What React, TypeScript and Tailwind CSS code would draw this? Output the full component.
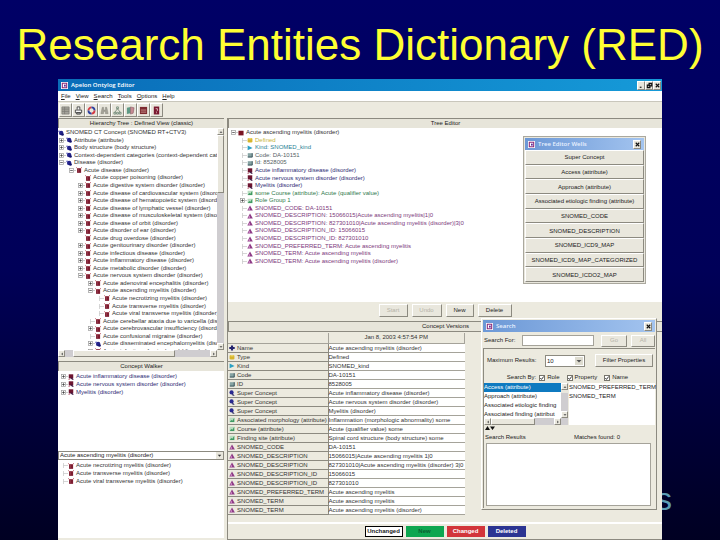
import React from 'react';

type IconKind =
  | 'node' | 'concept' | 'pointer' | 'square' | 'defined' | 'kind' | 'code' | 'role' | 'property' | 'plus4' | 'superc';

function Icon({ kind }: { kind: IconKind }) {
  const shapes: Record<IconKind, React.ReactNode> = {
    node: (
      <>
        <circle cx="4.2" cy="4" r="3" fill="#23238c" />
        <circle cx="1.4" cy="1.8" r="1.1" fill="#5a5ab4" />
        <circle cx="6" cy="6" r="1.8" fill="#15156e" />
      </>
    ),
    concept: (
      <>
        <rect x="1.4" y="1.6" width="5.4" height="6.2" fill="#7d1c30" />
        <path d="M0.2 0.4L2.4 2.6M7.8 0.2L5.8 2.4" stroke="#b8505c" strokeWidth="1.1" />
        <path d="M3.2 2.6v4" stroke="#a85060" strokeWidth="0.7" />
      </>
    ),
    pointer: (
      <>
        <path d="M1 0.4h6v5.6H1z" fill="#6e1530" />
        <path d="M5 4.4l2.8 3.4H5.4L3.6 5.4z" fill="#3b1540" />
        <path d="M0.4 7.4h2.4" stroke="#c06070" strokeWidth="0.9" />
      </>
    ),
    square: <rect x="0.6" y="1" width="6.8" height="6.2" fill="#7a1522" />,
    defined: (
      <>
        <rect x="0.8" y="1.2" width="6.4" height="6" rx="1.6" fill="#d6b52c" />
        <path d="M2 2.4h4" stroke="#fff3a0" strokeWidth="1" />
      </>
    ),
    kind: <path d="M0.8 0.8L7.4 4 0.8 7z" fill="#2aa0c4" />,
    code: (
      <>
        <rect x="1" y="1.6" width="6" height="5.2" fill="#86a3a3" />
        <path d="M7 1.6v5.2H1" fill="none" stroke="#2d4a50" strokeWidth="1.2" />
      </>
    ),
    role: (
      <>
        <rect x="0.8" y="1" width="6.6" height="6" fill="#b9dcc0" />
        <path d="M7 1v5.6H1L3 4l1.6 1z" fill="#3f9a62" />
      </>
    ),
    property: (
      <>
        <path d="M4 0.6L7.8 7.2H0.4z" fill="#8e3a86" />
        <path d="M3 3.4L2 6.4h2z" fill="#e6a6dc" />
      </>
    ),
    plus4: <path d="M2.6 0.6h2.8v2h2.2v2.8H5.4v2H2.6v-2H0.4V2.6h2.2z" fill="#23236e" />,
    superc: (
      <>
        <circle cx="3.4" cy="3.2" r="2.8" fill="#2a2a92" />
        <path d="M4.4 4.2l3.2 3.4-3-0.2z" fill="#101050" />
      </>
    ),
  };
  return (
    <svg viewBox="0 0 8 8" className="size-[6px] shrink-0" aria-hidden="true">
      {shapes[kind]}
    </svg>
  );
}

type Mark = '+' | '-' | '.' | '';

function Toggle({ mark }: { mark: Mark }) {
  return (
    <svg viewBox="0 0 7 5" className="h-[5px] w-[7px] shrink-0" aria-hidden="true">
      {(mark === '+' || mark === '-') && (
        <>
          <rect x="0.5" y="0.5" width="4" height="4" fill="#fff" stroke="#9a9a9a" strokeWidth="0.7" />
          <path d={mark === '+' ? 'M1.2 2.5h2.6M2.5 1.2v2.6' : 'M1.2 2.5h2.6'} stroke="#333" strokeWidth="0.7" />
          <path d="M5 2.5h2" stroke="#b5b5b5" strokeWidth="0.7" />
        </>
      )}
      {mark === '.' && <path d="M2.5 0v5M2.5 2.5H7" stroke="#c4c4c4" strokeWidth="0.7" />}
    </svg>
  );
}

const indent = ['pl-0', 'pl-px', 'pl-[11px]', 'pl-[20px]', 'pl-[30px]', 'pl-[39px]'];

type Row = [number, Mark, IconKind, string];

const hierarchy: Row[] = [
  [1, '+', 'node', 'Attribute (attribute)'],
  [1, '+', 'node', 'Body structure (body structure)'],
  [1, '+', 'node', 'Context-dependent categories (context-dependent cate'],
  [1, '-', 'node', 'Disease (disorder)'],
  [2, '-', 'concept', 'Acute disease (disorder)'],
  [3, '', 'concept', 'Acute copper poisoning (disorder)'],
  [3, '+', 'concept', 'Acute digestive system disorder (disorder)'],
  [3, '+', 'concept', 'Acute disease of cardiovascular system (disord'],
  [3, '+', 'concept', 'Acute disease of hematopoietic system (disord'],
  [3, '+', 'concept', 'Acute disease of lymphatic vessel (disorder)'],
  [3, '+', 'concept', 'Acute disease of musculoskeletal system (disor'],
  [3, '+', 'concept', 'Acute disease of orbit (disorder)'],
  [3, '+', 'concept', 'Acute disorder of ear (disorder)'],
  [3, '', 'concept', 'Acute drug overdose (disorder)'],
  [3, '+', 'concept', 'Acute genitourinary disorder (disorder)'],
  [3, '+', 'concept', 'Acute infectious disease (disorder)'],
  [3, '+', 'concept', 'Acute inflammatory disease (disorder)'],
  [3, '+', 'concept', 'Acute metabolic disorder (disorder)'],
  [3, '-', 'concept', 'Acute nervous system disorder (disorder)'],
  [4, '+', 'concept', 'Acute adenoviral encephalitis (disorder)'],
  [4, '-', 'concept', 'Acute ascending myelitis (disorder)'],
  [5, '.', 'concept', 'Acute necrotizing myelitis (disorder)'],
  [5, '.', 'concept', 'Acute transverse myelitis (disorder)'],
  [5, '.', 'concept', 'Acute viral transverse myelitis (disorder)'],
  [4, '.', 'concept', 'Acute cerebellar ataxia due to varicella (disor'],
  [4, '+', 'concept', 'Acute cerebrovascular insufficiency (disorde'],
  [4, '.', 'concept', 'Acute confusional migraine (disorder)'],
  [4, '+', 'node', 'Acute disseminated encephalomyelitis (disor'],
  [4, '+', 'concept', 'Acute infection of spinal cord (disorder)'],
];

const editor: [Mark, IconKind, string, string][] = [
  ['.', 'defined', 'text-[#c9b73c]', 'Defined'],
  ['.', 'kind', 'text-[#2a7f96]', 'Kind: SNOMED_kind'],
  ['.', 'code', 'text-[#555f66]', 'Code: DA-10151'],
  ['.', 'code', 'text-[#555f66]', 'Id: 8528005'],
  ['.', 'pointer', 'text-[#2c2c74]', 'Acute inflammatory disease (disorder)'],
  ['.', 'pointer', 'text-[#2c2c74]', 'Acute nervous system disorder (disorder)'],
  ['.', 'pointer', 'text-[#2c2c74]', 'Myelitis (disorder)'],
  ['.', 'role', 'text-[#2f7a4c]', 'some Course (attribute): Acute (qualifier value)'],
  ['+', 'role', 'text-[#2f7a4c]', 'Role Group 1'],
  ['.', 'property', 'text-[#7c3a7c]', 'SNOMED_CODE: DA-10151'],
  ['.', 'property', 'text-[#7c3a7c]', 'SNOMED_DESCRIPTION: 15066015|Acute ascending myelitis|1|0'],
  ['.', 'property', 'text-[#7c3a7c]', 'SNOMED_DESCRIPTION: 827301010|Acute ascending myelitis (disorder)|3|0'],
  ['.', 'property', 'text-[#7c3a7c]', 'SNOMED_DESCRIPTION_ID: 15066015'],
  ['.', 'property', 'text-[#7c3a7c]', 'SNOMED_DESCRIPTION_ID: 827301010'],
  ['.', 'property', 'text-[#7c3a7c]', 'SNOMED_PREFERRED_TERM: Acute ascending myelitis'],
  ['.', 'property', 'text-[#7c3a7c]', 'SNOMED_TERM: Acute ascending myelitis'],
  ['.', 'property', 'text-[#7c3a7c]', 'SNOMED_TERM: Acute ascending myelitis (disorder)'],
];

const versions: [IconKind, string, string][] = [
  ['plus4', 'Name', 'Acute ascending myelitis (disorder)'],
  ['defined', 'Type', 'Defined'],
  ['kind', 'Kind', 'SNOMED_kind'],
  ['code', 'Code', 'DA-10151'],
  ['code', 'ID', '8528005'],
  ['superc', 'Super Concept', 'Acute inflammatory disease (disorder)'],
  ['superc', 'Super Concept', 'Acute nervous system disorder (disorder)'],
  ['superc', 'Super Concept', 'Myelitis (disorder)'],
  ['role', 'Associated morphology (attribute)', 'Inflammation (morphologic abnormality) some'],
  ['role', 'Course (attribute)', 'Acute (qualifier value) some'],
  ['role', 'Finding site (attribute)', 'Spinal cord structure (body structure) some'],
  ['property', 'SNOMED_CODE', 'DA-10151'],
  ['property', 'SNOMED_DESCRIPTION', '15066015|Acute ascending myelitis 1|0'],
  ['property', 'SNOMED_DESCRIPTION', '827301010|Acute ascending myelitis (disorder) 3|0'],
  ['property', 'SNOMED_DESCRIPTION_ID', '15066015'],
  ['property', 'SNOMED_DESCRIPTION_ID', '827301010'],
  ['property', 'SNOMED_PREFERRED_TERM', 'Acute ascending myelitis'],
  ['property', 'SNOMED_TERM', 'Acute ascending myelitis'],
  ['property', 'SNOMED_TERM', 'Acute ascending myelitis (disorder)'],
];

const wells = [
  'Super Concept',
  'Access (attribute)',
  'Approach (attribute)',
  'Associated etiologic finding (attribute)',
  'SNOMED_CODE',
  'SNOMED_DESCRIPTION',
  'SNOMED_ICD9_MAP',
  'SNOMED_ICD9_MAP_CATEGORIZED',
  'SNOMED_ICDO2_MAP',
];

const raised = 'border border-t-white border-l-white border-r-[#8c8a80] border-b-[#8c8a80] bg-[#e9e7dd]';

function TreeRow({ row }: { row: Row }) {
  const [depth, mark, icon, label] = row;
  return (
    <li className={`flex items-center ${indent[depth]}`}>
      <Toggle mark={mark} />
      <Icon kind={icon} />
      <span className="pl-[2px]">{label}</span>
    </li>
  );
}

function PanelHeader({ children }: { children: React.ReactNode }) {
  return (
    <h2 className="h-[10px] shrink-0 border-t border-l border-[#8c8a80] bg-[#e7e5da] text-center leading-[9px]">
      {children}
    </h2>
  );
}

function ScrollArrow({ dir }: { dir: 'up' | 'down' | 'left' | 'right' }) {
  const d = { up: 'M2 5h4L4 3z', down: 'M2 3h4L4 5z', left: 'M5 2v4L3 4z', right: 'M3 2v4l2-2z' }[dir];
  return (
    <button aria-label={`Scroll ${dir}`} className={`flex size-[7px] shrink-0 items-center justify-center ${raised}`}>
      <svg viewBox="0 0 8 8" className="size-[6px] shrink-0"><path d={d} fill="#444" /></svg>
    </button>
  );
}

function AppMark() {
  return (
    <svg viewBox="0 0 8 8" className="size-[7px] shrink-0" aria-hidden="true">
      <rect width="8" height="8" fill="#fff" />
      <path d="M1.5 1.5h5v5h-5z" fill="none" stroke="#8a2a7a" strokeWidth="1.2" />
      <path d="M3.4 3h2v2.2h-2z" fill="#5a2a9a" />
    </svg>
  );
}

function WindowButton({ kind }: { kind: 'min' | 'restore' | 'close' }) {
  const d = { min: 'M2 6h2', restore: 'M3.5 1.5h3v3h-3zM1.5 3.5h3v3h-3z', close: 'M2 2l4 4M6 2L2 6' }[kind];
  return (
    <button aria-label={kind} className={`flex h-[9px] w-[8px] items-center justify-center ${raised}`}>
      <svg viewBox="0 0 8 8" className="size-[7px] shrink-0"><path d={d} fill="none" stroke="#111" strokeWidth="1.3" /></svg>
    </button>
  );
}

function DialogTitle({ children }: { children: React.ReactNode }) {
  return (
    <div className="flex h-[12px] items-center gap-[3px] bg-linear-to-r from-[#6c98d6] to-[#a3c4ef] px-[3px]">
      <AppMark />
      <h3 className="flex-1 font-['Open_Sans',sans-serif] font-semibold text-[#e8f1ff]">{children}</h3>
      <WindowButton kind="close" />
    </div>
  );
}

const toolIcons: [string, React.ReactNode][] = [
  ['Save', <path key="a" d="M1 1h8v8H1zM1 3.5h8M1 6h8M4 1v8" fill="#a5a39b" stroke="#7b7972" strokeWidth="0.8" />],
  ['Print', <path key="a" d="M3.5 4V1h3v3M1.5 4.5h7v3h-7zM3 7.5h4V9H3z" fill="#f6f6f6" stroke="#333" strokeWidth="0.9" />],
  ['Refresh', (
    <g key="a" fill="none" strokeWidth="2">
      <path d="M1.6 5A3.4 3.4 0 0 1 5 1.6" stroke="#d43a44" />
      <path d="M5 1.6A3.4 3.4 0 0 1 8.4 5" stroke="#2b3f9e" />
      <path d="M8.4 5A3.4 3.4 0 0 1 5 8.4" stroke="#d43a44" />
      <path d="M5 8.4A3.4 3.4 0 0 1 1.6 5" stroke="#2b3f9e" />
    </g>
  )],
  ['Find', <path key="a" d="M2.5 1.5h1.5v3h2v-3h1.5L9 8.5H6V6H4v2.5H1z" fill="#a4a298" stroke="#85837a" strokeWidth="0.5" />],
  ['Hierarchy', <path key="a" d="M4 1h2v2H4zM1 7h2v2H1zM7 7h2v2H7zM5 3L2 7M5 3l3 4M4 7h2v2H4z" fill="#eee" stroke="#4c6d55" strokeWidth="0.7" />],
  ['Copy', (
    <g key="a">
      <path d="M1 2l4-1v7l-4 1z" fill="#5f9a86" />
      <path d="M5 1l4 1-1 6-3 1z" fill="#c58a92" stroke="#73434f" strokeWidth="0.5" />
    </g>
  )],
  ['Browse', (
    <g key="a">
      <path d="M1 1h8v8H1z" fill="#7c2a30" />
      <path d="M2 4.5h6M2 6.8h6" stroke="#e0b0a8" strokeWidth="0.8" />
    </g>
  )],
  ['Help', (
    <g key="a">
      <path d="M2 0.6h6v8.8H2z" fill="#7a1830" />
      <path d="M4 3h2v2L5 6M5 7v1" fill="none" stroke="#f0d0d0" strokeWidth="0.9" />
    </g>
  )],
];

function LeftPane() {
  return (
    <div className="flex w-[166px] shrink-0 flex-col pb-[2px]">
      <PanelHeader>Hierarchy Tree : Defined View (classic)</PanelHeader>
      <div className="flex h-[222px] shrink-0 bg-white">
        <div className="h-full min-w-0 flex-1 overflow-hidden pt-px">
          <ul className="grid h-[226px] auto-rows-fr whitespace-nowrap text-[#333]">
            <li className="flex items-center gap-[2px]"><Icon kind="node" />SNOMED CT Concept (SNOMED RT+CTV3)</li>
            {hierarchy.map((r) => <TreeRow key={r[3]} row={r} />)}
          </ul>
        </div>
        <div className="flex w-[7px] flex-col bg-[#cfcdd0]">
          <ScrollArrow dir="up" />
          <div className={`h-[58px] ${raised}`} />
          <div className="flex-1" />
          <ScrollArrow dir="down" />
        </div>
      </div>
      <div className="flex h-[8px] shrink-0 pr-[7px]">
        <div className="flex h-[7px] flex-1 bg-[#cfcdd0]">
          <ScrollArrow dir="left" />
          <div className="w-[8px]" />
          <div className={`w-[102px] ${raised}`} />
          <div className="flex-1" />
          <ScrollArrow dir="right" />
        </div>
      </div>
      <div className="h-[3px] shrink-0" />
      <PanelHeader>Concept Walker</PanelHeader>
      <div className="h-[80px] shrink-0 bg-white pt-[2px]">
        <ul className="grid h-[23px] auto-rows-fr pl-[2px] text-[#2c2c74]">
          {['Acute inflammatory disease (disorder)', 'Acute nervous system disorder (disorder)', 'Myelitis (disorder)'].map((t) => (
            <TreeRow key={t} row={[1, '+', 'pointer', t]} />
          ))}
        </ul>
      </div>
      <div className="relative h-[9px] shrink-0">
        <select aria-label="Concept" className="block h-full w-full appearance-none border border-[#8c8a80] bg-white pl-px leading-[7px]">
          <option>Acute ascending myelitis (disorder)</option>
        </select>
        <svg viewBox="0 0 8 8" className="pointer-events-none absolute top-px right-px size-[7px] bg-[#e9e7dd]"><path d="M2 3h4L4 5.4z" fill="#333" /></svg>
      </div>
      <div className="min-h-[78px] flex-1 bg-white pt-[2px]">
        <ul className="grid h-[23px] auto-rows-fr pl-[2px] text-[#333]">
          {['Acute necrotizing myelitis (disorder)', 'Acute transverse myelitis (disorder)', 'Acute viral transverse myelitis (disorder)'].map((t) => (
            <TreeRow key={t} row={[1, '.', 'concept', t]} />
          ))}
        </ul>
      </div>
    </div>
  );
}

function SearchDialog() {
  const check = 'size-[6px] appearance-none border border-[#77756c] bg-white';
  return (
    <section aria-label="Search" className="absolute top-[-3px] right-[5px] w-[176px] border border-t-white border-l-white border-r-[#8c8a80] border-b-[#8c8a80] bg-[#eceadf] p-px">
      <DialogTitle>Search</DialogTitle>
      <div className="flex h-[16px] items-center pt-px pl-px">
        <label htmlFor="term" className="w-[38px]">Search For:</label>
        <input id="term" className="h-[11px] w-[72px] border border-[#a5a39a] bg-white" />
        <button className={`ml-[7px] h-[12px] w-[26px] text-[#b5b3a8] ${raised}`}>Go</button>
        <button className={`ml-[4px] h-[12px] w-[24px] text-[#b5b3a8] ${raised}`}>All</button>
      </div>
      <div className="flex h-[160px] flex-col border-t border-l border-[#8c8a80]">
        <div className="flex h-[23px] shrink-0 items-center pl-[3px]">
          <label htmlFor="max" className="w-[58px]">Maximum Results:</label>
          <span className="relative">
            <select id="max" className="block h-[12px] w-[40px] appearance-none border border-[#8c8a80] bg-white pl-px leading-[10px]">
              <option>10</option>
            </select>
            <svg viewBox="0 0 8 8" className="pointer-events-none absolute top-[2px] right-[2px] size-[8px] bg-[#dedcd0]"><path d="M1.5 3h5L4 5.6z" fill="#555" /></svg>
          </span>
          <button className={`ml-[10px] h-[13px] w-[58px] ${raised}`}>Filter Properties</button>
        </div>
        <div className="flex h-[11px] shrink-0 items-center justify-center gap-[3px]">
          <span>Search By:</span>
          {['Role', 'Property', 'Name'].map((t) => (
            <label key={t} className="mr-[4px] flex items-center gap-[2px]">
              <span className="relative flex">
                <input type="checkbox" defaultChecked className={check} />
                <svg viewBox="0 0 6 6" className="pointer-events-none absolute inset-0 size-[6px]"><path d="M1.3 3l1.2 1.4L4.8 1.4" fill="none" stroke="#222" strokeWidth="0.9" /></svg>
              </span>
              {t}
            </label>
          ))}
        </div>
        <div className="flex h-[42px] shrink-0 gap-px">
          <div className="flex w-[84px] shrink-0 bg-white">
            <div className="flex min-w-0 flex-1 flex-col">
              <ul className="h-[35px] overflow-hidden leading-[9px] whitespace-nowrap">
                <li className="bg-[#0f7ac0] text-white">Access (attribute)</li>
                <li>Approach (attribute)</li>
                <li>Associated etiologic finding</li>
                <li>Associated finding (attribut</li>
              </ul>
              <div className="flex bg-[#cfcdd0]">
                <ScrollArrow dir="left" />
                <div className={`w-[44px] ${raised}`} />
                <div className="flex-1" />
                <ScrollArrow dir="right" />
              </div>
            </div>
            <div className="flex w-[7px] flex-col bg-[#cfcdd0] pb-[7px]">
              <ScrollArrow dir="up" />
              <div className="h-[3px] bg-[#e9e7dd]" />
              <div className="flex-1" />
              <ScrollArrow dir="down" />
            </div>
          </div>
          <ul className="min-w-0 flex-1 bg-white leading-[9px] whitespace-nowrap">
            <li>SNOMED_PREFERRED_TERM</li>
            <li>SNOMED_TERM</li>
          </ul>
        </div>
        <svg viewBox="0 0 12 6" className="h-[6px] w-[12px] shrink-0" aria-hidden="true"><path d="M1 5h5L3.5 1zM6 1.5h5L8.5 5z" fill="#111" /></svg>
        <div className="flex h-[12px] shrink-0 items-center">
          <label htmlFor="results" className="w-[90px] pl-px">Search Results</label>
          <span>Matches found: 0</span>
        </div>
        <textarea id="results" readOnly className="mr-[4px] mb-[2px] ml-[2px] block min-h-0 flex-1 resize-none border border-[#a5a39a] bg-white" />
      </div>
    </section>
  );
}

function RightPane() {
  return (
    <div className="flex min-w-0 flex-1 flex-col border-l border-[#8c8a80]">
      <PanelHeader>Tree Editor</PanelHeader>
      <div className="relative h-[174px] shrink-0 bg-white pt-px">
        <ul className="grid h-[136px] auto-rows-fr pl-[3px] whitespace-nowrap">
          <li className="flex items-center text-[#333]"><Toggle mark="-" /><Icon kind="square" /><span className="pl-[2px]">Acute ascending myelitis (disorder)</span></li>
          {editor.map(([mark, icon, color, text], i) => (
            <li key={i} className={`flex items-center pl-[9px] ${color}`}>
              <Toggle mark={mark} />
              <Icon kind={icon} />
              <span className="pl-[2px]">{text}</span>
            </li>
          ))}
        </ul>
        <section aria-label="Tree Editor Wells" className="absolute top-[8px] right-[16px] w-[123px] border border-[#aaa89e] bg-[#e9e7dd] p-px">
          <DialogTitle>Tree Editor Wells</DialogTitle>
          <div className="grid h-[132px] auto-rows-fr">
            {wells.map((w) => <button key={w} className={`leading-none ${raised}`}>{w}</button>)}
          </div>
        </section>
      </div>
      <div className="flex h-[19px] shrink-0 items-center justify-center gap-[4px] pb-[3px]">
        <button disabled className={`h-[13px] w-[29px] text-[#b5b3a8] ${raised}`}>Start</button>
        <button disabled className={`h-[13px] w-[30px] text-[#b5b3a8] ${raised}`}>Undo</button>
        <button className={`h-[13px] w-[28px] ${raised}`}>New</button>
        <button className={`h-[13px] w-[34px] ${raised}`}>Delete</button>
      </div>
      <div className="relative flex flex-1 flex-col">
        <PanelHeader>Concept Versions</PanelHeader>
        <div className="h-[2px] shrink-0 border-t border-[#8c8a80]" />
        <table className="w-[237px] table-fixed border-collapse text-left whitespace-nowrap text-[#333]">
          <colgroup><col className="w-[100px]" /><col /></colgroup>
          <thead>
            <tr className="h-[10px] leading-[9px]">
              <td className="border-b border-[#a5a39a] p-0" />
              <th className="border-r border-b border-l border-[#a5a39a] p-0 text-center font-normal">Jan 8, 2003 4:57:54 PM</th>
            </tr>
          </thead>
          <tbody>
            {versions.map(([icon, name, value], i) => (
              <tr key={i} className="h-[9px] leading-[8px]">
                <th scope="row" className="border-r border-b border-[#8c8a80] p-0 font-normal">
                  <span className="flex h-[8px] items-center gap-[2px] pl-px"><Icon kind={icon} />{name}</span>
                </th>
                <td className="border-b border-[#a5a39a] bg-white p-0">{value}</td>
              </tr>
            ))}
          </tbody>
        </table>
        <div className="min-h-[7px] flex-1" />
        <div className="flex h-[18px] shrink-0 items-center justify-center gap-[3px] border-t-2 border-b border-t-white border-b-[#8c8a80] font-bold">
          <button className="h-[11px] w-[38px] border border-black bg-white">Unchanged</button>
          <button className="h-[11px] w-[38px] bg-[#0da650] text-[#0b5f32]">New</button>
          <button className="h-[11px] w-[38px] bg-[#d2353a] text-white">Changed</button>
          <button className="h-[11px] w-[38px] bg-[#2b3492] text-white">Deleted</button>
        </div>
        <SearchDialog />
      </div>
    </div>
  );
}

export default function App() {
  return (
    <div className="relative flex min-h-screen flex-col bg-linear-to-b from-[#000066] via-[#000058] to-[#000022] font-['Liberation_Sans',Arial,sans-serif]">
      <h1 className="h-[79px] shrink-0 pt-[20px] text-center text-[44px] leading-[50px] whitespace-nowrap text-[#ffff33]">
        Research Entities Dictionary (RED)
      </h1>
      <span className="absolute right-[48px] bottom-[23px] text-[32px] leading-[36px] text-[#5b9db5]">s</span>
      <main className="relative mx-[58px] flex flex-1 flex-col bg-[#eceadf] text-[6px] leading-[7px] text-[#222]">
        <header className="flex h-[12px] shrink-0 items-center bg-linear-to-r from-[#0a6cb8] to-[#169ad8] pr-px pl-[3px]">
          <AppMark />
          <span className="flex-1 pl-[3px] font-['Open_Sans',sans-serif] font-semibold text-white">Apelon Ontylog Editor</span>
          <WindowButton kind="min" />
          <WindowButton kind="restore" />
          <WindowButton kind="close" />
        </header>
        <nav className="flex h-[10px] shrink-0 items-center gap-[5px] bg-white pl-[3px]">
          {['File', 'View', 'Search', 'Tools', 'Options', 'Help'].map((m) => (
            <button key={m}><u>{m[0]}</u>{m.slice(1)}</button>
          ))}
        </nav>
        <div className="flex h-[17px] shrink-0 items-center border-t border-[#c9c7bc] pl-px">
          {toolIcons.map(([name, art]) => (
            <button key={name} aria-label={name} className={`flex h-[14px] w-[13px] items-center justify-center ${raised}`}>
              <svg viewBox="0 0 10 10" className="size-[9px] shrink-0">{art}</svg>
            </button>
          ))}
        </div>
        <div className="flex flex-1 gap-[3px]">
          <LeftPane />
          <RightPane />
        </div>
      </main>
    </div>
  );
}
